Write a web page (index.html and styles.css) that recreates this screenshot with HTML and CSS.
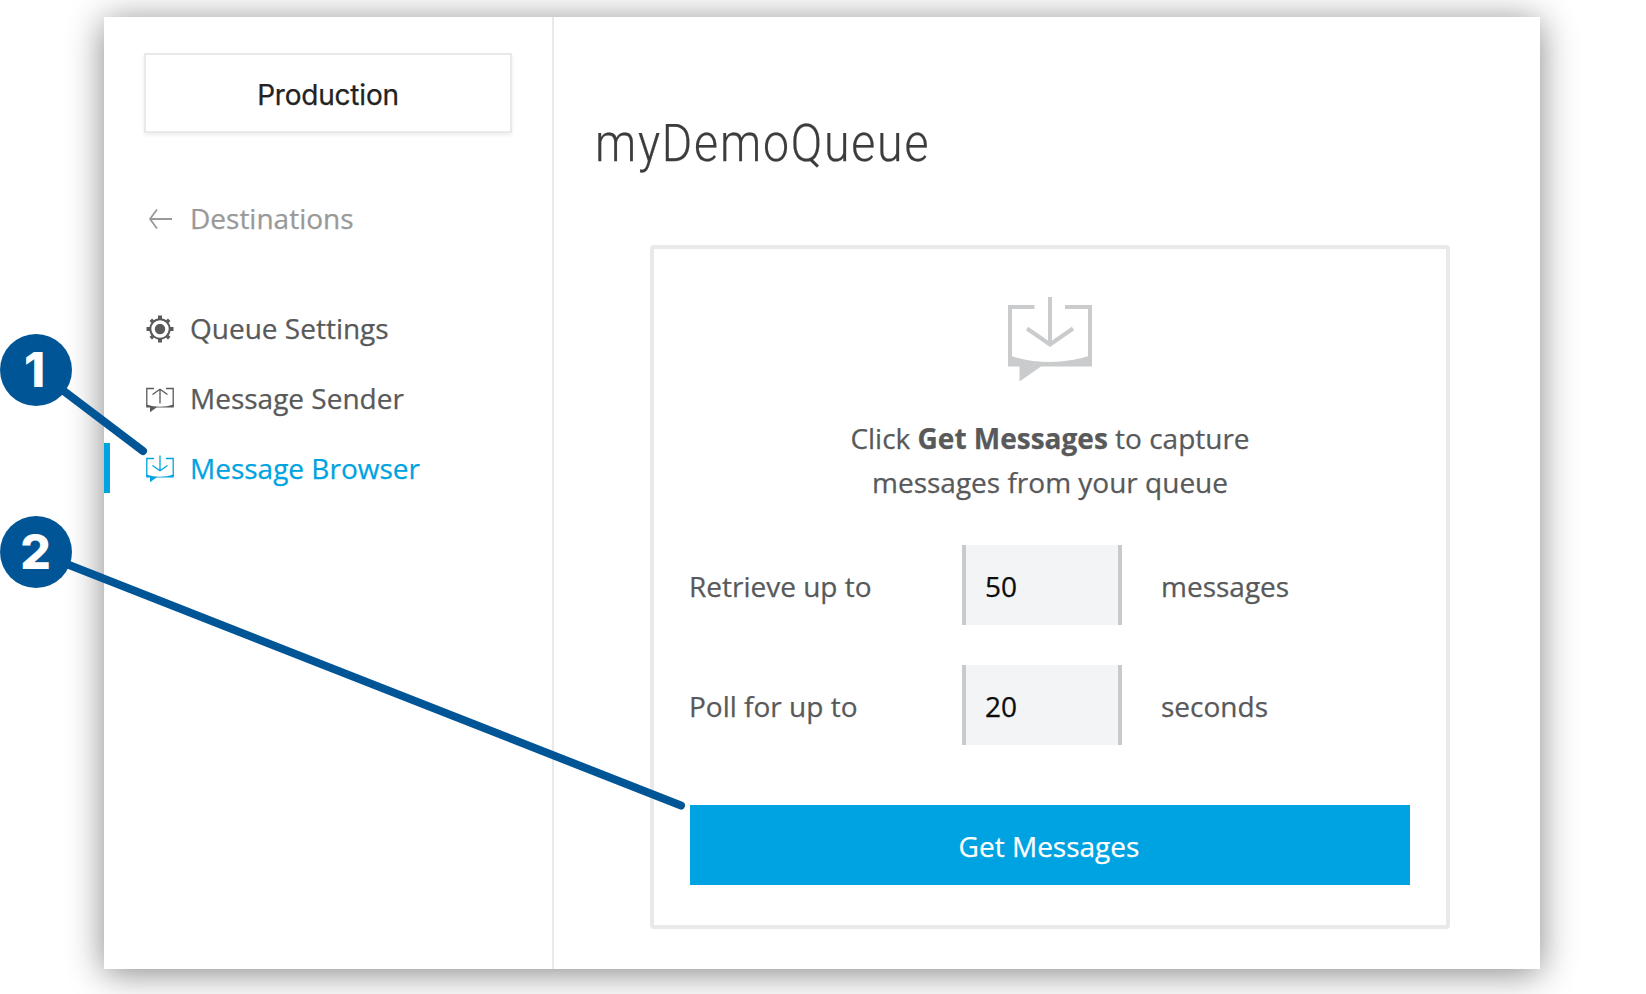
FILE: index.html
```html
<!DOCTYPE html>
<html lang="en">
<head>
<meta charset="utf-8">
<title>myDemoQueue</title>
<link rel="stylesheet" href="styles.css">
</head>
<body>
<div class="window">
  <aside class="sidebar">
    <button class="env">Production</button>
    <a class="back">
      <svg class="icon" viewBox="0 0 32 32"><path d="M28 16H5.500M13 6.500L6 16l7 9.500" fill="none" stroke="currentColor" stroke-width="1.800"/></svg>
      <span>Destinations</span>
    </a>
    <nav class="nav">
      <a class="item">
        <svg class="icon" viewBox="0 0 32 32"><g fill="none" stroke="currentColor"><circle cx="16" cy="16" r="9.700" stroke-width="2"/><path d="M16 2.500v4M16 25.500v4M2.500 16h4M25.500 16h4" stroke-width="4"/><path d="M6.800 6.800l2 2M23.200 23.200l2 2M25.200 6.800l-2 2M6.800 25.200l2-2" stroke-width="3.600"/></g><circle cx="16" cy="16" r="5.200" fill="currentColor"/></svg>
        <span>Queue Settings</span>
      </a>
      <a class="item">
        <svg class="icon" viewBox="0 0 32 32"><g fill="none" stroke="currentColor" stroke-width="1.300"><path d="M10 5.500H2.800V23M22 5.500H29.200V23M16 20.500V6.500M8.500 11.500L16 6.200l7.500 5.300"/></g><path d="M2.200 21.500Q16 26 29.800 21.500V24.500H12.500L6 29.200V24.500H2.200z" fill="currentColor"/></svg>
        <span>Message Sender</span>
      </a>
      <a class="item active">
        <svg class="icon" viewBox="0 0 32 32"><g fill="none" stroke="currentColor" stroke-width="1.300"><path d="M10 5.500H2.800V23M22 5.500H29.200V23M16 2.500V17.500M8.500 12.500L16 17.700l7.500-5.200"/></g><path d="M2.200 21.500Q16 26 29.800 21.500V24.500H12.500L6 29.200V24.500H2.200z" fill="currentColor"/></svg>
        <span>Message Browser</span>
      </a>
    </nav>
  </aside>
  <main class="main">
    <h1>myDemoQueue</h1>
    <section class="card">
      <svg class="card-icon" viewBox="0 0 86 86"><g fill="none" stroke="currentColor" stroke-width="4"><path d="M27.500 10H3V68M58 10H83V68"/><path d="M43 0V47M20 31.500L43 47.500L66 31.500"/></g><path d="M1 58Q43 72 85 58V69.500H34L12.500 84.500V69.500H1z" fill="currentColor"/></svg>
      <p class="hint">Click <b>Get Messages</b> to capture<br>messages from your queue</p>
      <div class="row"><label>Retrieve up to</label><div class="field">50</div><span>messages</span></div>
      <div class="row"><label>Poll for up to</label><div class="field">20</div><span>seconds</span></div>
      <button class="primary">Get Messages</button>
    </section>
  </main>
</div>
<svg class="callouts" viewBox="0 0 1646 994">
  <path d="M36 370L143 451M36 552L681 805.500"/>
  <circle cx="36" cy="370" r="36"/><circle cx="36" cy="552" r="36"/>
  <text x="34.500" y="387">1</text><text x="35.500" y="569">2</text>
</svg>
</body>
</html>
```
FILE: styles.css
```css
* { box-sizing: border-box; }
body {
  margin: 0;
  width: 1646px;
  height: 994px;
  padding: 17px 106px 25px 104px;
  overflow: hidden;
  background: #fff;
  color: #58595a;
  font: 28px/40px "Open Sans", sans-serif;
  -webkit-text-stroke: .25px currentColor;
}
button { font: inherit; border: 0; padding: 0; }
.window {
  display: flex;
  height: 952px;
  background: #fff;
  box-shadow: 0 4px 34px rgba(0, 0, 0, .48);
}
.sidebar {
  width: 450px;
  padding-top: 36px;
  border-right: 2px solid #e7e9eb;
}
.env {
  display: block;
  width: 368px;
  height: 80px;
  margin-left: 40px;
  padding-top: 4px;
  background: #fff;
  border: 2px solid #e7e9eb;
  box-shadow: 0 2px 4px rgba(0, 0, 0, .08);
  color: #232323;
  font: 28px/40px Inter, sans-serif;
  letter-spacing: -.2px;
}
.back, .item {
  display: flex;
  align-items: center;
  gap: 14px;
  height: 50px;
  padding-left: 40px;
}
.back { margin-top: 60px; color: #999; }
.icon { width: 32px; height: 32px; margin-top: 2px; }
.nav {
  display: flex;
  flex-direction: column;
  gap: 20px;
  margin-top: 60px;
}
.active {
  padding-left: 34px;
  border-left: 6px solid #00a3e1;
  color: #00a3e1;
}
.main { flex: 1; padding: 94px 90px 0 41px; }
h1 {
  margin: 0;
  height: 64px;
  color: #3b3c3d;
  font: 300 51px/66px Roboto, sans-serif;
  letter-spacing: 2px;
  transform: scaleX(.91);
  transform-origin: left;
}
.card {
  margin: 70px 0 0 55px;
  width: 800px;
  height: 684px;
  padding: 48px 36px 0;
  border: 4px solid #e7e9eb;
  border-radius: 4px;
}
.card-icon {
  display: block;
  width: 86px;
  height: 86px;
  margin: 0 auto;
  color: #c9cbcc;
}
.hint { margin: 33px 0 0; line-height: 44px; text-align: center; }
.row {
  display: grid;
  grid-template-columns: 272px 160px 1fr;
  align-items: center;
  height: 80px;
  margin-top: 40px;
}
.row label { margin-left: -1px; line-height: 42px; }
.row span { padding-left: 39px; line-height: 42px; }
.hint + .row { margin-top: 41px; }
.field {
  height: 80px;
  padding-left: 19px;
  border: solid #c9cacb;
  border-width: 0 4px;
  background: #f2f4f6;
  color: #0c0c0d;
  line-height: 82px;
}
.row label, .row span { padding-top: 1px; }
.primary {
  display: block;
  width: 720px;
  height: 80px;
  margin-top: 60px;
  padding: 2px 2px 0 0;
  background: #00a3e1;
  color: #fff;
}
.callouts {
  position: absolute;
  left: 0;
  top: 0;
  width: 1646px;
  height: 994px;
}
.callouts path { stroke: #005596; stroke-width: 8; stroke-linecap: round; }
.callouts circle { fill: #005596; }
.callouts text {
  fill: #fff;
  font: 800 48px Inter, sans-serif;
  text-anchor: middle;
}
```
